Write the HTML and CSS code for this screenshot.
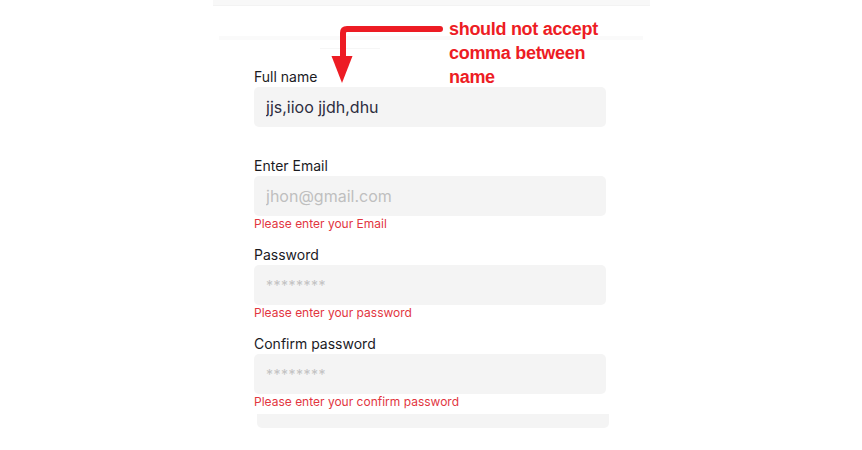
FILE: index.html
```html
<!DOCTYPE html>
<html lang="en">
<head>
<meta charset="utf-8">
<title>Sign up</title>
<link rel="stylesheet" href="styles.css">
</head>
<body>
<div class="page">
  <div class="topbar"></div>
  <div class="divider"></div>
  <div class="divider-short"></div>

  <form class="form">
    <div class="field">
      <label class="label" for="fullname">Full name</label>
      <input class="input" id="fullname" type="text" value="jjs,iioo jjdh,dhu">
      <div class="error"></div>
    </div>
    <div class="field">
      <label class="label" for="email">Enter Email</label>
      <input class="input" id="email" type="email" placeholder="jhon@gmail.com">
      <div class="error">Please enter your Email</div>
    </div>
    <div class="field">
      <label class="label" for="pw">Password</label>
      <input class="input pw" id="pw" type="password" placeholder="********">
      <div class="error">Please enter your password</div>
    </div>
    <div class="field last">
      <label class="label" for="cpw">Confirm password</label>
      <input class="input pw" id="cpw" type="password" placeholder="********">
      <div class="error">Please enter your confirm password</div>
    </div>
    <div class="next-box"></div>
  </form>

  <svg class="arrow" width="120" height="64" viewBox="330 22 120 64" aria-hidden="true">
    <path d="M440 29 H347 Q343 29 343 33 V58" fill="none" stroke="#ed1c24" stroke-width="6" stroke-linecap="round" stroke-linejoin="round"/>
    <polygon points="331.5,56 352.5,56 342,83" fill="#ed1c24"/>
  </svg>
  <div class="note">should not accept<br>comma between<br>name</div>
</div>
</body>
</html>
```

FILE: styles.css
```css
* { box-sizing: border-box; }

html, body {
  margin: 0;
  padding: 0;
  background: #ffffff;
}

.page {
  position: relative;
  width: 862px;
  height: 450px;
  overflow: hidden;
  font-family: Inter, "Noto Sans", sans-serif;
}

.topbar {
  margin-left: 213px;
  width: 437px;
  height: 6px;
  background: #f8f8f8;
  border-bottom: 1px solid #f3f3f3;
}

.divider {
  margin-top: 30px;
  margin-left: 219px;
  width: 424px;
  height: 4px;
  background: #fafafa;
}

.divider-short {
  margin-top: 8px;
  margin-left: 320px;
  width: 60px;
  height: 1px;
  background: #f6f6f6;
}

.form {
  margin: 18px 0 0 254px;
  width: 352px;
  display: flex;
  flex-direction: column;
}

.field {
  display: flex;
  flex-direction: column;
  margin-bottom: 13px;
}

.field.last { margin-bottom: 0; }

.label {
  font-size: 14px;
  line-height: 20px;
  color: #1b1b1f;
}

.input {
  width: 352px;
  height: 40px;
  border: none;
  outline: none;
  border-radius: 5px;
  background: #f4f4f4;
  padding: 0 12px;
  font-family: Inter, "Noto Sans", sans-serif;
  font-size: 16px;
  color: #2d2d3f;
}

.input::placeholder {
  color: #bfbfbf;
}

.input.pw::placeholder {
  font-size: 14px;
  letter-spacing: 0.5px;
  color: #c2c2c2;
}

.error {
  min-height: 16px;
  font-size: 12px;
  line-height: 16px;
  color: #e2363f;
}

.next-box {
  margin: 4px 0 0 3px;
  width: 352px;
  height: 14px;
  background: #f4f4f4;
  border-radius: 0 0 5px 5px;
}

.arrow {
  position: absolute;
  left: 330px;
  top: 22px;
}

.note {
  position: absolute;
  left: 449px;
  top: 17px;
  font-family: "Liberation Sans", Arial, sans-serif;
  font-weight: bold;
  font-size: 18px;
  line-height: 24px;
  letter-spacing: -0.3px;
  color: #ed1c24;
}
```
